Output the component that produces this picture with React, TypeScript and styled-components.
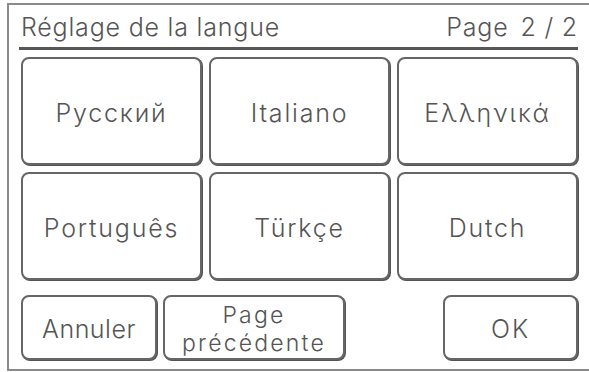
import React from "react";
import styled, { createGlobalStyle } from "styled-components";

const GlobalStyle = createGlobalStyle`
    html, body {
        margin: 0;
        padding: 0;
        background: #ffffff;
        overflow: hidden;
    }
    body {
        font-family: Inter, "Open Sans", sans-serif;
        font-weight: 300;
        color: #555555;
    }
`;

const languages = ["Русский", "Italiano", "Ελληνικά", "Português", "Türkçe", "Dutch"];

const App: React.FC = () => {
    return (
        <>
            <GlobalStyle />
            <Frame>
                <Header>
                    <Title>Réglage de la langue</Title>
                    <PageInfo>
                        <span>Page</span>
                        <span>2 / 2</span>
                    </PageInfo>
                </Header>
                <Grid>
                    {languages.map((lang) => (
                        <LangButton key={lang}>{lang}</LangButton>
                    ))}
                </Grid>
                <Footer>
                    <SmallButton $width={136} $spacing={0.5}>Annuler</SmallButton>
                    <SmallButton $width={182} $spacing={2.2}>
                        <Lines>
                            <Line>Page</Line>
                            <Line>précédente</Line>
                        </Lines>
                    </SmallButton>
                    <Spacer />
                    <SmallButton $width={135} $spacing={2}>OK</SmallButton>
                </Footer>
            </Frame>
        </>
    );
};

const Frame = styled.div`
    margin: 3px 0 0 7px;
    width: 600px;
    height: 368px;
    box-sizing: border-box;
    border: 2px solid #8a8a8a;
    border-right: none;
    padding: 0 0 0 12px;
    display: flex;
    flex-direction: column;
`;

const Header = styled.div`
    width: 559px;
    height: 45px;
    margin-left: -2px;
    padding: 2px 0 0 2px;
    box-sizing: border-box;
    border-bottom: 3px solid #575757;
    display: flex;
    align-items: center;
    justify-content: space-between;
    font-size: 25px;
    letter-spacing: 0.8px;
`;

const Title = styled.div`
    color: #555555;
`;

const PageInfo = styled.div`
    display: flex;
    gap: 12px;
    color: #555555;
`;

const Grid = styled.div`
    margin-top: 7px;
    display: grid;
    grid-template-columns: repeat(3, 181px);
    grid-auto-rows: 108px;
    gap: 7px;
`;

const ButtonBase = styled.div`
    box-sizing: border-box;
    border: 2px solid #666666;
    border-radius: 8px;
    box-shadow: 1px 1px 0 #555555;
    display: flex;
    align-items: center;
    justify-content: center;
    text-align: center;
    color: #555555;
    background: #ffffff;
    font-size: 25px;
    white-space: nowrap;
`;

const LangButton = styled(ButtonBase)`
    letter-spacing: 1.8px;
    padding-top: 3px;
`;

const Footer = styled.div`
    margin-top: 15px;
    width: 557px;
    height: 65px;
    display: flex;
    gap: 6px;
`;

const SmallButton = styled(ButtonBase)<{ $width: number; $spacing: number }>`
    width: ${(p) => p.$width}px;
    height: 65px;
    letter-spacing: ${(p) => p.$spacing}px;
    padding-top: 2px;
`;

const Lines = styled.div`
    display: flex;
    flex-direction: column;
    align-items: center;
    font-size: 23px;
    margin-top: 1px;
`;

const Line = styled.span`
    line-height: 28px;
`;

const Spacer = styled.div`
    flex: 1;
`;

export default App;
